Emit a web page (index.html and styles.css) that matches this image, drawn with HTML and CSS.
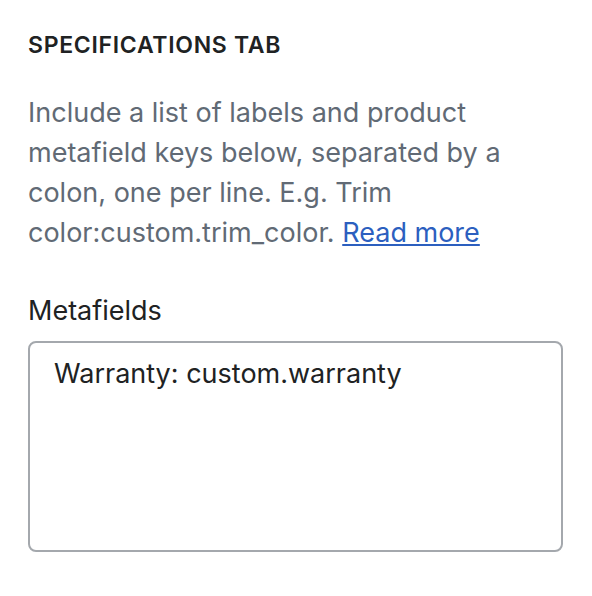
FILE: index.html
```html
<!DOCTYPE html>
<html>
<head>
<meta charset="utf-8">
<link rel="stylesheet" href="styles.css">
</head>
<body>
<div class="panel">
  <h2 class="heading">SPECIFICATIONS TAB</h2>
  <p class="info">Include a list of labels and product metafield keys below, separated by a colon, one per line. E.g. Trim color:custom.trim_color. <a href="#" class="link">Read more</a></p>
  <label class="label">Metafields</label>
  <div class="textarea">Warranty: custom.warranty</div>
</div>
</body>
</html>
```

FILE: styles.css
```css
html, body {
  margin: 0;
  padding: 0;
  background: #ffffff;
}
body {
  font-family: Inter, "Noto Sans", sans-serif;
  -webkit-font-smoothing: antialiased;
}
.panel {
  width: 535px;
  padding: 29px 0 0 28px;
  display: flex;
  flex-direction: column;
}
.heading {
  margin: 0;
  font-size: 23px;
  line-height: 32px;
  font-weight: 600;
  color: #202223;
  letter-spacing: 0.7px;
}
.info {
  margin: 32px 0 0 0;
  font-size: 27px;
  line-height: 40px;
  color: #616a75;
}
.link {
  color: #2c5fbf;
  text-decoration: underline;
}
.label {
  margin-top: 38px;
  font-size: 27px;
  line-height: 40px;
  color: #202223;
}
.textarea {
  margin-top: 10px;
  box-sizing: border-box;
  height: 211px;
  border: 2px solid #a4a8ad;
  border-radius: 8px;
  padding: 11px 24px;
  font-size: 27px;
  line-height: 40px;
  color: #202223;
}
```
